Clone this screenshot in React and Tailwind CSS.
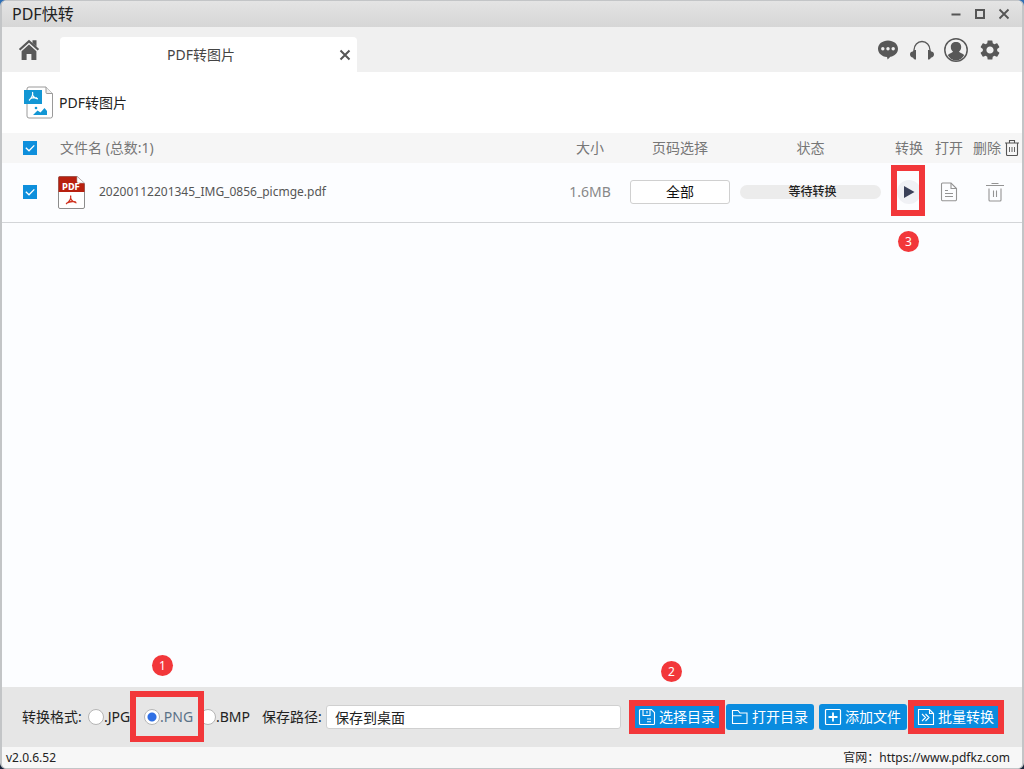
import { useState } from "react";
import { MdSettings } from "react-icons/md";

const FORMATS = ["JPG", "PNG", "BMP"];

function CheckBox({ label, checked, onChange }) {
  return (
    <label className="grid place-items-center">
      <input
        type="checkbox"
        aria-label={label}
        checked={checked}
        onChange={onChange}
        className="peer col-start-1 row-start-1 size-[14px] appearance-none border border-[#0e8fdc] bg-white checked:bg-[#0e8fdc]"
      />
      <svg
        viewBox="0 0 14 14"
        className="pointer-events-none invisible col-start-1 row-start-1 size-[14px] peer-checked:visible"
        fill="none"
        stroke="white"
        strokeWidth="1.3"
      >
        <path d="M2.8 6.8 6 9.8l5.3-5.4" />
      </svg>
    </label>
  );
}

function Badge({ children, className }) {
  return (
    <span
      className={`absolute flex size-[21px] items-center justify-center rounded-full bg-[#f2373a] text-xs text-white ${className}`}
    >
      {children}
    </span>
  );
}

function HomeIcon() {
  return (
    <svg viewBox="0 0 22 22" className="size-[22px]" fill="#585858">
      <path d="M1.600 10.800 11 2.300l9.400 8.500" stroke="#585858" strokeWidth="2.200" fill="none" />
      <path d="M14.500 1.200h4v6.500l-4-3.600z" />
      <path d="M11 5.600l7.400 6.600V21h-5v-6H8.600v6h-5v-8.800z" />
    </svg>
  );
}

function ChatIcon() {
  return (
    <svg viewBox="0 0 24 24" className="size-6">
      <path
        d="M12 2.500c5.600 0 10 3.600 10 8.200 0 4.200-3.400 7.300-7.600 8L11.600 21.600l-.6-2.600C5.600 18.500 2 15 2 10.700c0-4.600 4.400-8.200 10-8.200z"
        fill="#585858"
      />
      <circle cx="6.800" cy="10.800" r="1.700" fill="#f0f0f0" />
      <circle cx="12" cy="10.800" r="1.700" fill="#f0f0f0" />
      <circle cx="17.200" cy="10.800" r="1.700" fill="#f0f0f0" />
    </svg>
  );
}

function HeadsetIcon() {
  return (
    <svg viewBox="0 0 24 24" className="size-6">
      <path
        d="M4 14v-2a8 8.500 0 0 1 16 0v2"
        fill="none"
        stroke="#585858"
        strokeWidth="1.300"
      />
      <path d="M6 12v9.500c-1.800 0-2.600-.8-2.800-1.800C1 19.500 0 18 0 16.500s1-3 3.200-3.200c.2-.8 1-1.300 2.800-1.300z" fill="#585858" />
      <path d="M18 12v9.500c1.800 0 2.600-.8 2.800-1.800 2.200-.2 3.200-1.700 3.200-3.200s-1-3-3.200-3.200c-.2-.8-1-1.300-2.800-1.300z" fill="#585858" />
    </svg>
  );
}

function UserIcon() {
  return (
    <svg viewBox="0 0 24 24" className="size-6">
      <circle cx="12" cy="12" r="11.200" fill="none" stroke="#585858" strokeWidth="1.500" />
      <path
        d="M12 4c3.200 0 5.200 2 5.200 4.900 0 2-.9 3.700-2.200 4.700.3 1.200 3 1.600 5.200 3.400A10 10 0 0 1 12 22.500a10 10 0 0 1-8.200-5.500c2.200-1.800 4.900-2.200 5.200-3.400-1.300-1-2.200-2.700-2.200-4.700C6.800 6 8.800 4 12 4z"
        fill="#585858"
      />
    </svg>
  );
}

function PdfToImageIcon() {
  return (
    <svg viewBox="0 0 30 34" className="h-[34px] w-[30px]">
      <path
        d="M5 1h17l6.500 6.500V30a2 2 0 0 1-2 2H5a2 2 0 0 1-2-2V3a2 2 0 0 1 2-2z"
        fill="white"
        stroke="#9a9a9a"
      />
      <path d="M22 1v5.500a1 1 0 0 0 1 1h5.500" fill="#eee" stroke="#9a9a9a" />
      <rect x="0" y="4" width="18" height="14" fill="#1296d4" />
      <path
        d="M8.500 6c.8 2.600.4 4.500-3.500 8.500M9 9.500c.8 2.300 2.500 3 5 3.300M6.500 12.500c2-1 4-1.300 6.500-.6"
        fill="none"
        stroke="white"
        strokeWidth="1.200"
      />
      <circle cx="12" cy="22" r="1.300" fill="#1296d4" />
      <path d="M9 29l4.500-4.500 3 2 4-4.500 2.500 3v4z" fill="#1296d4" />
    </svg>
  );
}

function PdfFileIcon() {
  return (
    <svg viewBox="0 0 27 33" className="h-[33px] w-[27px]">
      <path
        d="M2 .500h17l7.500 7V31a1.500 1.500 0 0 1-1.500 1.500H2A1.500 1.500 0 0 1 .500 31V2A1.500 1.500 0 0 1 2 .500z"
        fill="white"
        stroke="#8c8c8c"
      />
      <path d="M1 .500h18l7.500 7V16H.500V1z" fill="#b8200f" />
      <path d="M19 .500v5a1.500 1.500 0 0 0 1.500 1.500h6z" fill="white" stroke="#a9a9a9" strokeWidth=".6" />
      <text
        x="13"
        y="13.500"
        textAnchor="middle"
        fontSize="8"
        fontWeight="bold"
        fontFamily="DejaVu Sans, sans-serif"
        fill="white"
      >
        PDF
      </text>
      <path
        d="M12.500 19.500c1 2.500.2 5-4.500 8.500M12.500 22c1 2.500 3 4.300 6 4.800M8.500 27.300c2.500-1.600 6-2.300 9.500-1.300"
        fill="none"
        stroke="#d0321f"
        strokeWidth="1.300"
      />
    </svg>
  );
}

function FileIcon() {
  return (
    <svg viewBox="0 0 18 20" className="h-5 w-[18px]" fill="none" stroke="#949494" strokeWidth="1.100">
      <path d="M2.500 1h8.500l5.500 5.500V17.500a1.200 1.200 0 0 1-1.200 1.200H2.700a1.200 1.200 0 0 1-1.200-1.200V2a1 1 0 0 1 1-1z" />
      <path d="M11 1v5.500h5.500M5 8.500h3M5 11.500h8M5 14.500h8" />
    </svg>
  );
}

function TrashIcon() {
  return (
    <svg viewBox="0 0 20 20" className="size-5" fill="none" stroke="#949494" strokeWidth="1.100">
      <path d="M1 3.500h18M6.500 1.500h7M4 6.500V18a1 1 0 0 0 1 1h10a1 1 0 0 0 1-1V6.500M8.500 8.500v6.500M11.500 8.500v6.500" />
    </svg>
  );
}

function TrashAllIcon() {
  return (
    <svg viewBox="0 0 14 18" className="h-[18px] w-[14px]" fill="none" stroke="#555" strokeWidth="1.100">
      <path d="M0 4h14M4.500 4V1.500h5V4M1.500 4v11.500a1 1 0 0 0 1 1h9a1 1 0 0 0 1-1V4" />
      <path d="M4.500 8v5M7 8v5M9.500 8v5" strokeWidth=".9" />
    </svg>
  );
}

function SaveIcon() {
  return (
    <svg viewBox="0 0 18 18" className="size-[18px]" fill="none" stroke="white" strokeWidth="1.100">
      <path d="M2.500 1.500h11l3 3v11a1 1 0 0 1-1 1h-13a1 1 0 0 1-1-1v-13a1 1 0 0 1 1-1zM5 1.500v6h7v-6M9 3v2.500M9 11h4M9 13.800h4" />
    </svg>
  );
}

function FolderIcon() {
  return (
    <svg viewBox="0 0 18 18" className="size-[18px]" fill="none" stroke="white" strokeWidth="1.100">
      <path d="M1.500 15.500v-13h5.500l2 2.500h7v10.500zM1.500 7.800h9" />
    </svg>
  );
}

function AddIcon() {
  return (
    <svg viewBox="0 0 18 18" className="size-[18px]" fill="none" stroke="white">
      <rect x="1.500" y="1.500" width="15" height="15" rx="1" strokeWidth="1.200" />
      <path d="M9 4.500v9M4.500 9h9" strokeWidth="1.800" />
    </svg>
  );
}

function BatchIcon() {
  return (
    <svg viewBox="0 0 18 18" className="size-[18px]" fill="none" stroke="white" strokeWidth="1.100">
      <path d="M1.500 1.500h11l4 4v11h-15zM12.500 1.500v4h4M5 6l3.500 3.500L5 13M8.500 6l3.500 3.500L8.500 13" />
    </svg>
  );
}

function ActionButton({ icon, children, onClick }) {
  return (
    <button
      type="button"
      onClick={onClick}
      className="flex h-[26px] w-[88px] items-center gap-[3px] rounded-[3px] bg-[#0a8cdf] pl-[5px] text-sm leading-5 whitespace-nowrap text-white"
    >
      {icon}
      {children}
    </button>
  );
}

export default function App() {
  const [format, setFormat] = useState("PNG");
  const [selected, setSelected] = useState(true);
  const [path, setPath] = useState("保存到桌面");

  const toggle = () => setSelected(!selected);

  return (
    <div className="min-h-screen bg-linear-to-b from-[#2f6fb5] to-[#17243a] font-['Noto_Sans','Noto_Sans_CJK_SC',sans-serif]">
      <div className="flex min-h-screen flex-col overflow-hidden rounded-md border-x-2 border-y border-[#c3c5c7] bg-[#fcfdff]">
        <header className="flex h-[26px] items-center justify-between bg-linear-to-b from-[#e4e4e4] to-[#d6d6d6] px-[10px]">
          <h1 className="text-base leading-6 text-[#222]">PDF快转</h1>
          <div className="flex gap-2">
            <button type="button" aria-label="最小化" className="size-4">
              <svg viewBox="0 0 16 16" stroke="#555" strokeWidth="2">
                <path d="M3.500 8.500h9" />
              </svg>
            </button>
            <button type="button" aria-label="最大化" className="size-4">
              <svg viewBox="0 0 16 16" fill="none" stroke="#555" strokeWidth="2">
                <path d="M4 4h8v8H4z" />
              </svg>
            </button>
            <button type="button" aria-label="关闭" className="size-4">
              <svg viewBox="0 0 16 16" stroke="#555" strokeWidth="1.800">
                <path d="M3.500 3.500l9 9M12.500 3.500l-9 9" />
              </svg>
            </button>
          </div>
        </header>

        <nav className="flex h-[45px] items-center bg-[#f0f0f0] pr-5">
          <button type="button" aria-label="首页" className="flex w-[58px] justify-center pr-1">
            <HomeIcon />
          </button>
          <div className="flex w-[297px] items-center self-end rounded-t bg-white pr-[5px] pl-1">
            <span className="h-[35px] flex-1 text-center text-sm leading-[35px] text-[#444]">
              PDF转图片
            </span>
            <button type="button" aria-label="关闭标签" className="size-[14px]">
              <svg viewBox="0 0 14 14" stroke="#555" strokeWidth="2">
                <path d="M2.500 2.500l9 9M11.500 2.500l-9 9" />
              </svg>
            </button>
          </div>
          <div className="ml-auto flex gap-[10px]">
            <button type="button" aria-label="消息">
              <ChatIcon />
            </button>
            <button type="button" aria-label="客服">
              <HeadsetIcon />
            </button>
            <button type="button" aria-label="用户">
              <UserIcon />
            </button>
            <button type="button" aria-label="设置">
              <MdSettings className="size-6 text-[#585858]" />
            </button>
          </div>
        </nav>

        <div className="flex h-[61px] items-center gap-[5px] bg-white pl-[22px]">
          <PdfToImageIcon />
          <h2 className="text-sm leading-5 text-[#222]">PDF转图片</h2>
        </div>

        <main className="flex-1">
          <table className="w-full table-fixed border-collapse">
            <colgroup>
              <col className="w-[56px]" />
              <col />
              <col className="w-[80px]" />
              <col className="w-[100px]" />
              <col className="w-[161px]" />
              <col className="w-[36px]" />
              <col className="w-[44px]" />
              <col className="w-[51px]" />
            </colgroup>
            <thead>
              <tr className="h-[30px] bg-[#f6f6f6] text-sm leading-5 whitespace-nowrap text-[#777] *:font-normal">
                <th>
                  <CheckBox label="全选" checked={selected} onChange={toggle} />
                </th>
                <th className="pl-[2px] text-left">文件名 (总数:1)</th>
                <th>大小</th>
                <th>页码选择</th>
                <th>状态</th>
                <th>转换</th>
                <th>打开</th>
                <th>
                  <button type="button" className="flex items-center gap-1 pl-[2px]">
                    删除
                    <TrashAllIcon />
                  </button>
                </th>
              </tr>
            </thead>
            <tbody>
              <tr className="h-[59px] border-b border-[#d3d5d8]">
                <td>
                  <CheckBox
                    label="20200112201345_IMG_0856_picmge.pdf"
                    checked={selected}
                    onChange={toggle}
                  />
                </td>
                <td>
                  <div className="flex items-center gap-[14px]">
                    <PdfFileIcon />
                    <span className="text-xs leading-5 text-[#555]">
                      20200112201345_IMG_0856_picmge.pdf
                    </span>
                  </div>
                </td>
                <td className="text-center text-sm leading-5 text-[#888]">1.6MB</td>
                <td>
                  <button
                    type="button"
                    className="flex h-6 w-full items-center justify-center rounded-[3px] border border-[#d0d0d0] bg-white text-sm leading-5 text-[#111]"
                  >
                    全部
                  </button>
                </td>
                <td className="px-[10px]">
                  <div className="h-[14px] rounded-full bg-[#ececec] pl-1 text-center text-xs leading-[14px] font-medium text-[#222]">
                    等待转换
                  </div>
                </td>
                <td>
                  <div className="relative flex justify-center">
                    <button
                      type="button"
                      aria-label="转换"
                      className="flex size-6 items-center justify-center rounded-full bg-[#f0f1f5]"
                    >
                      <svg viewBox="0 0 12 12" className="size-3" fill="#3b4159">
                        <path d="M1 0l10.500 6L1 12z" />
                      </svg>
                    </button>
                    <span className="pointer-events-none absolute -top-[15px] left-0 h-[51px] w-[34px] border-[6px] border-[#f2373a]" />
                    <Badge className="top-[51px] left-[7px]">3</Badge>
                  </div>
                </td>
                <td>
                  <button type="button" aria-label="打开" className="flex w-full justify-center">
                    <FileIcon />
                  </button>
                </td>
                <td className="pr-1">
                  <button type="button" aria-label="删除" className="flex w-full justify-center">
                    <TrashIcon />
                  </button>
                </td>
              </tr>
            </tbody>
          </table>
        </main>

        <section className="flex h-[60px] items-center bg-[#e6e6e6] pr-[22px] pl-5 text-sm leading-5 text-[#222]">
          <fieldset className="flex items-center">
            <legend className="float-left w-[66px] whitespace-nowrap">转换格式:</legend>
            {FORMATS.map((name) => (
              <label
                key={name}
                className="relative flex w-[56px] items-center has-checked:text-[#5b7288]"
              >
                <input
                  type="radio"
                  name="format"
                  value={name}
                  checked={format === name}
                  onChange={() => setFormat(name)}
                  className="size-4 shrink-0 appearance-none rounded-full border border-[#b5b5b5] bg-white checked:bg-[radial-gradient(circle,#2f6fe4_4px,white_5px)]"
                />
                .{name}
                {name === "PNG" && (
                  <>
                    <span className="pointer-events-none absolute -top-4 -left-[14px] z-10 h-[51px] w-[74px] border-[6px] border-[#f2373a]" />
                    <Badge className="-top-[52px] left-2">1</Badge>
                  </>
                )}
              </label>
            ))}
          </fieldset>
          <label htmlFor="save-path" className="w-[64px] shrink-0 pl-[6px] whitespace-nowrap">
            保存路径:
          </label>
          <input
            id="save-path"
            type="text"
            value={path}
            onChange={(e) => setPath(e.target.value)}
            className="mr-3 ml-[6px] h-6 min-w-0 flex-1 rounded-[3px] border border-[#d0d0d0] bg-white px-2"
          />
          <div className="flex gap-[5px]">
            <div className="relative">
              <ActionButton icon={<SaveIcon />}>选择目录</ActionButton>
              <span className="pointer-events-none absolute -inset-1 border-[6px] border-[#f2373a]" />
              <Badge className="-top-[43px] left-7">2</Badge>
            </div>
            <ActionButton icon={<FolderIcon />}>打开目录</ActionButton>
            <ActionButton icon={<AddIcon />}>添加文件</ActionButton>
            <div className="relative">
              <ActionButton icon={<BatchIcon />}>批量转换</ActionButton>
              <span className="pointer-events-none absolute -inset-1 border-[6px] border-[#f2373a]" />
            </div>
          </div>
        </section>

        <footer className="flex h-[21px] items-center justify-between bg-[#f7f7f7] pr-3 pl-1 text-xs leading-4 text-[#222]">
          <span>v2.0.6.52</span>
          <span>
            官网：<a href="https://www.pdfkz.com">https://www.pdfkz.com</a>
          </span>
        </footer>
      </div>
    </div>
  );
}
